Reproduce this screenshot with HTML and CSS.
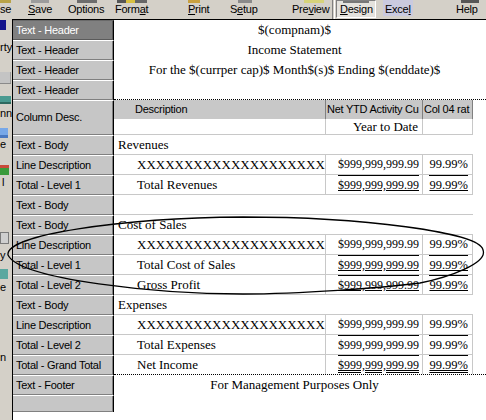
FILE: index.html
```html
<!DOCTYPE html>
<html>
<head>
<meta charset="utf-8">
<title>Report Designer</title>
<link rel="stylesheet" href="styles.css">
</head>
<body>
<div class="app">
  <div class="toolbar">
    <div class="tb"><div class="ico"><i class="bit b-close"></i></div><span class="lbl">se</span></div>
    <div class="tb"><div class="ico"><i class="bit b-save"></i></div><span class="lbl"><u>S</u>ave</span></div>
    <div class="tb"><div class="ico"><i class="bit b-options"></i></div><span class="lbl">Options</span></div>
    <div class="tb"><div class="ico"><i class="bit b-format"></i></div><span class="lbl">Form<u>a</u>t</span></div>
    <div class="tb"><div class="ico"><i class="bit b-print"></i></div><span class="lbl"><u>P</u>rint</span></div>
    <div class="tb"><div class="ico"><i class="bit b-setup"></i></div><span class="lbl">S<u>e</u>tup</span></div>
    <div class="tb"><div class="ico"><i class="bit b-preview"></i></div><span class="lbl">Pre<u>v</u>iew</span></div>
    <div class="sep"></div>
    <div class="tb"><div class="pressed"><div class="ico ico-in"><i class="bit b-design"></i></div><span class="lbl"><u>D</u>esign</span></div></div>
    <div class="tb"><div class="excel"><div class="ico"></div><span class="lbl">Exce<u>l</u></span></div></div>
    <div class="tb"><div class="ico"><i class="bit b-help"></i></div><span class="lbl">Help</span></div>
  </div>

  <div class="main">
    <div class="strip">
      <i class="si ic-navy"></i>
      <span class="st st-rty">rty</span>
      <i class="si ic-gray1"></i>
      <i class="si ic-teal1"></i>
      <span class="st st-nn">nn</span>
      <i class="si ic-blue"></i>
      <span class="st st-e1">e</span>
      <i class="si ic-green"></i>
      <span class="st st-l">l</span>
      <i class="si ic-gray2"></i>
      <span class="st st-y">y</span>
      <i class="si ic-teal2"></i>
      <span class="st st-e2">e</span>
      <span class="st st-n">n</span>
    </div>

    <div class="designer">
      <div class="sections">
        <div class="sec sel">Text - Header</div>
        <div class="sec">Text - Header</div>
        <div class="sec">Text - Header</div>
        <div class="sec">Text - Header</div>
        <div class="sec tall">Column Desc.</div>
        <div class="sec">Text - Body</div>
        <div class="sec">Line Description</div>
        <div class="sec">Total - Level 1</div>
        <div class="sec">Text - Body</div>
        <div class="sec">Text - Body</div>
        <div class="sec">Line Description</div>
        <div class="sec">Total - Level 1</div>
        <div class="sec">Total - Level 2</div>
        <div class="sec">Text - Body</div>
        <div class="sec">Line Description</div>
        <div class="sec">Total - Level 2</div>
        <div class="sec">Total - Grand Total</div>
        <div class="sec">Text - Footer</div>
        <div class="sec short"></div>
      </div>

      <div class="report">
        <div class="ph">$(compnam)$</div>
        <div class="ph">Income Statement</div>
        <div class="ph">For the $(currper cap)$ Month$(s)$ Ending $(enddate)$</div>
        <div class="ph last"></div>

        <div class="band">
          <div class="bc bc-desc">Description</div>
          <div class="bc">Net YTD Activity Cu</div>
          <div class="bc">Col 04 rat</div>
        </div>
        <div class="subrow">
          <div class="sc"></div>
          <div class="sc sc-a">Year to Date</div>
          <div class="sc"></div>
        </div>

        <div class="brow">Revenues</div>
        <div class="row">
          <div></div>
          <div class="d">XXXXXXXXXXXXXXXXXXXX</div>
          <div class="a">$999,999,999.99</div>
          <div class="p">99.99%</div>
        </div>
        <div class="row">
          <div></div>
          <div class="d">Total Revenues</div>
          <div class="a"><span class="ov ul">$999,999,999.99</span></div>
          <div class="p"><span class="ov ul">99.99%</span></div>
        </div>
        <div class="brow"></div>
        <div class="brow">Cost of Sales</div>
        <div class="row">
          <div></div>
          <div class="d">XXXXXXXXXXXXXXXXXXXX</div>
          <div class="a">$999,999,999.99</div>
          <div class="p">99.99%</div>
        </div>
        <div class="row">
          <div></div>
          <div class="d">Total Cost of Sales</div>
          <div class="a"><span class="ov ul">$999,999,999.99</span></div>
          <div class="p"><span class="ov ul">99.99%</span></div>
        </div>
        <div class="row">
          <div></div>
          <div class="d">Gross Profit</div>
          <div class="a"><span class="ov ul">$999,999,999.99</span></div>
          <div class="p"><span class="ov ul">99.99%</span></div>
        </div>
        <div class="brow">Expenses</div>
        <div class="row">
          <div></div>
          <div class="d">XXXXXXXXXXXXXXXXXXXX</div>
          <div class="a">$999,999,999.99</div>
          <div class="p">99.99%</div>
        </div>
        <div class="row">
          <div></div>
          <div class="d">Total Expenses</div>
          <div class="a"><span class="ov">$999,999,999.99</span></div>
          <div class="p"><span class="ov">99.99%</span></div>
        </div>
        <div class="row grand">
          <div></div>
          <div class="d">Net Income</div>
          <div class="a"><span class="ov dbl">$999,999,999.99</span></div>
          <div class="p"><span class="ov dbl">99.99%</span></div>
        </div>
        <div class="foot">For Management Purposes Only</div>
      </div>
    </div>
  </div>

  <svg class="ellipse" width="486" height="420" viewBox="0 0 486 420">
    <path d="M 243 217 C 360 217, 480 232, 483 250 C 488 263, 450 277, 420 283 C 380 288, 300 294, 243 294 C 160 294, 20 280, 8 255 C 5 235, 120 218, 243 217 Z" fill="none" stroke="#000" stroke-width="1.3"/>
  </svg>
</div>
</body>
</html>
```

FILE: styles.css
```css
body {
  margin: 0;
  background: #fff;
  font-family: "Liberation Sans", Arial, sans-serif;
  color: #000;
}

.app {
  position: relative;
  width: 486px;
  height: 420px;
  overflow: hidden;
  background: #fff;
}

/* ---------- top toolbar ---------- */
.toolbar {
  height: 19px;
  background: #d4d0c8;
  display: grid;
  grid-template-columns: 28px 40px 47px 73px 42px 62px 39px 5px 47px 73px 30px;
  font-size: 11px;
  letter-spacing: -0.25px;
}

.tb {
  display: flex;
  flex-direction: column;
  overflow: hidden;
}

.ico {
  height: 3px;
  display: flex;
}

.ico-in {
  height: 2px;
}

.lbl {
  line-height: 13px;
  white-space: nowrap;
}

.lbl u {
  text-decoration: underline;
}

.bit {
  display: block;
  height: 3px;
}

.b-close { width: 11px; background: #b9a348; }
.b-save { width: 18px; margin-left: 3px; background: #9c9c9c; }
.b-options { width: 20px; margin-left: 9px; background: #6c6c6c; }
.b-format { width: 30px; margin-left: 2px; background: linear-gradient(90deg, #555 0 30%, #d8c040 30% 60%, #666 60%); }
.b-print { width: 12px; background: #c8a040; }
.b-setup { width: 14px; margin-left: 8px; background: #8a8a8a; }
.b-preview { width: 20px; margin-left: 12px; background: #d6d27a; }
.b-design { width: 26px; margin-left: 3px; height: 2px; background: #777; }
.b-help { width: 18px; margin-left: 5px; background: #555; }

.sep {
  margin: 0 1px;
  border-left: 1px solid #808080;
  border-right: 1px solid #fff;
}

.pressed {
  width: 40px;
  height: 18px;
  box-sizing: border-box;
  border-left: 1px solid #808080;
  border-top: 1px solid #808080;
  border-right: 1px solid #fff;
  border-bottom: 1px solid #fff;
  background: #e4e2dd;
  padding-left: 3px;
  display: flex;
  flex-direction: column;
}

.excel {
  width: 30px;
  height: 16px;
  background: #cacadf;
  padding-left: 2px;
  box-sizing: border-box;
  display: flex;
  flex-direction: column;
}

/* ---------- main area ---------- */
.main {
  display: flex;
  height: 401px;
}

.strip {
  width: 12px;
  flex: none;
  background: #d4d0c8;
  display: flex;
  flex-direction: column;
  font-size: 11px;
  overflow: hidden;
}

.si {
  display: block;
  flex: none;
}

.st {
  display: block;
  height: 12px;
  line-height: 12px;
  white-space: nowrap;
  flex: none;
}

.ic-navy { margin-top: 1px; height: 10px; width: 6px; background: #14148c; }
.st-rty { margin-top: 11px; }
.ic-gray1 { margin-top: 19px; height: 12px; width: 11px; background: #c4c4c4; box-shadow: inset 0 -1px #8a8a8a, inset -1px 0 #9a9a9a; }
.ic-teal1 { margin-top: 12px; height: 8px; width: 11px; background: #4a9a90; box-shadow: inset 0 -2px #2e6a60; }
.st-nn { margin-top: 3px; }
.ic-blue { margin-top: 9px; height: 10px; width: 8px; background: #78a8e8; box-shadow: inset 0 -3px #4a78c0; }
.st-e1 { margin-top: 0; }
.ic-green { margin-top: 15px; height: 10px; width: 9px; background: #3a9a3a; box-shadow: inset 0 3px #c84a3a; }
.st-l { margin-top: 1px; padding-left: 2px; }
.ic-gray2 { margin-top: 44px; height: 12px; width: 9px; background: #cfcfcf; box-shadow: inset 0 0 0 1px #7a7a7a; }
.st-y { margin-top: 5px; }
.ic-teal2 { margin-top: 8px; height: 10px; width: 8px; background: #5aa8a0; }
.st-e2 { margin-top: 2px; }
.st-n { margin-top: 58px; }

.designer {
  flex: 1;
  display: flex;
  border-top: 1px solid #000;
  border-left: 1px solid #000;
  background: #fff;
}

/* ---------- section buttons ---------- */
.sections {
  width: 101px;
  flex: none;
  display: flex;
  flex-direction: column;
}

.sec {
  height: 20px;
  box-sizing: border-box;
  background: #c6c6c6;
  border-top: 1px solid #fff;
  border-right: 1px solid #000;
  box-shadow: inset -1px -1px #808080;
  padding-left: 3px;
  line-height: 18px;
  font-size: 11px;
  letter-spacing: -0.25px;
  white-space: nowrap;
  overflow: hidden;
}

.sec.sel {
  background: #808080;
  color: #fff;
  border-top-color: #6a6a6a;
  box-shadow: inset -1px -1px #5a5a5a;
}

.sec.tall {
  height: 35px;
  line-height: 33px;
}

.sec.short {
  height: 17px;
}

/* ---------- report canvas ---------- */
.report {
  flex: 1;
  font-family: "Liberation Serif", "Times New Roman", serif;
  font-size: 13px;
}

.ph {
  height: 20px;
  box-sizing: border-box;
  line-height: 20px;
  text-align: center;
  padding-right: 11px;
  white-space: nowrap;
}

.ph.last {
  border-bottom: 1px dotted #000;
  line-height: 19px;
}

.band {
  display: grid;
  grid-template-columns: 212px 97px 50px;
  width: 359px;
  height: 19px;
  font-family: "Liberation Sans", Arial, sans-serif;
  font-size: 11px;
  letter-spacing: -0.25px;
  line-height: 18px;
}

.bc {
  background: #c8c8c8;
  border-right: 1px solid #808080;
  padding-left: 1px;
  white-space: nowrap;
  overflow: hidden;
}

.bc-desc {
  padding-left: 21px;
}

.subrow {
  display: grid;
  grid-template-columns: 212px 97px 50px;
  width: 359px;
  height: 16px;
  box-sizing: border-box;
  border-bottom: 1px solid #c8c8c8;
  line-height: 15px;
}

.sc {
  border-right: 1px solid #c8c8c8;
}

.sc-a {
  text-align: right;
  padding-right: 4px;
  white-space: nowrap;
}

.brow {
  width: 359px;
  height: 20px;
  box-sizing: border-box;
  border-bottom: 1px solid #c8c8c8;
  padding-left: 4px;
  line-height: 19px;
  white-space: nowrap;
}

.row {
  display: grid;
  grid-template-columns: 20px 192px 97px 50px;
  width: 359px;
  height: 20px;
  box-sizing: border-box;
  border-bottom: 1px solid #c8c8c8;
  line-height: 19px;
}

.row.grand {
  height: 19px;
  border-bottom: none;
}

.d {
  padding-left: 3px;
  border-right: 1px solid #c8c8c8;
  overflow: hidden;
  white-space: nowrap;
}

.a {
  text-align: right;
  padding-right: 3px;
  border-right: 1px solid #c8c8c8;
  font-size: 12px;
  color: #000;
  white-space: nowrap;
}

.p {
  text-align: right;
  padding-right: 4px;
  border-right: 1px solid #c8c8c8;
  font-size: 12.5px;
  color: #000;
  white-space: nowrap;
}

.ov {
  display: inline-block;
  vertical-align: top;
  border-top: 1px solid #000;
  line-height: 18px;
  color: #000;
}

.ul {
  text-decoration: underline;
}

.dbl {
  text-decoration: underline double;
}

.foot {
  height: 21px;
  box-sizing: border-box;
  border-top: 1px dotted #000;
  line-height: 19px;
  text-align: center;
  padding-right: 11px;
  white-space: nowrap;
}

/* ---------- hand-drawn highlight ---------- */
.ellipse {
  position: absolute;
  left: 0;
  top: 0;
  pointer-events: none;
}
```
